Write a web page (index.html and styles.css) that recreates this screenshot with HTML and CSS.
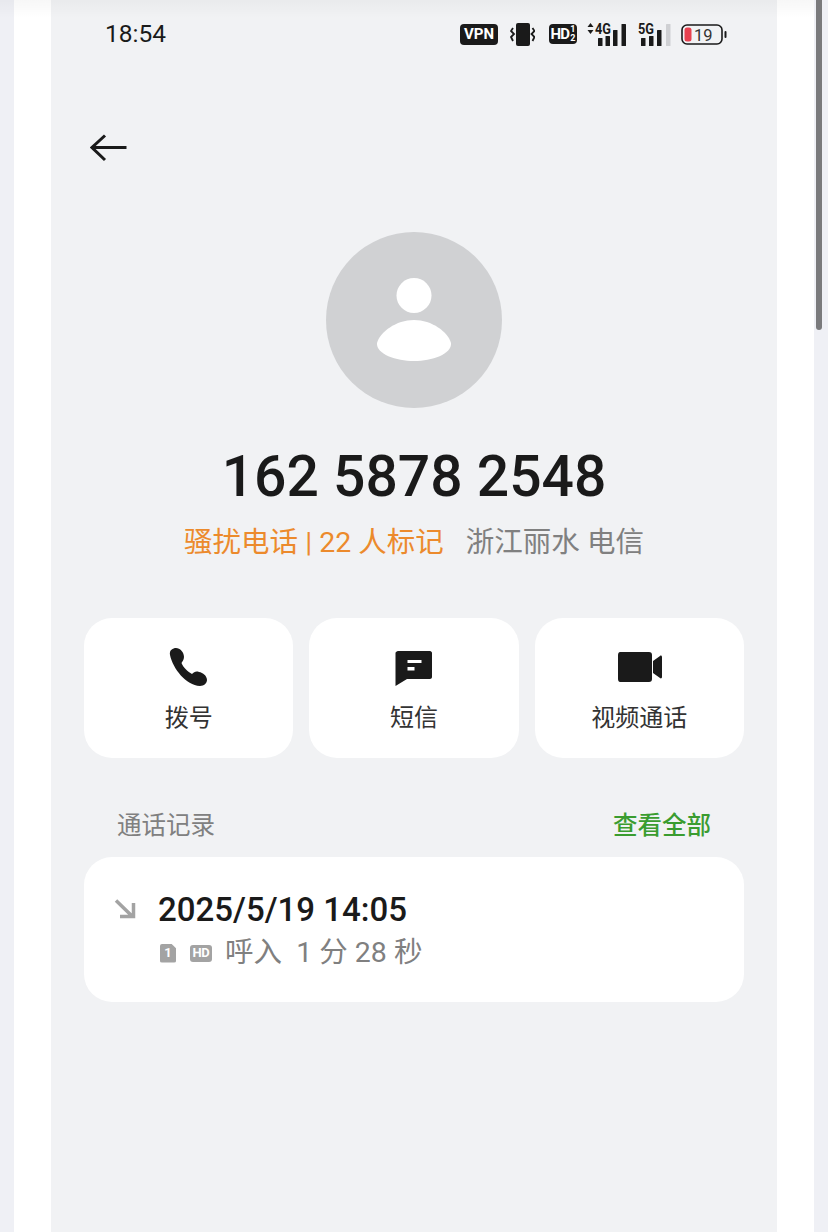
FILE: index.html
```html
<!DOCTYPE html>
<html lang="zh-CN">
<head>
  <meta charset="UTF-8">
  <title>通话详情</title>
  <meta name="viewport" content="width=device-width, initial-scale=1.0">
  <link rel="stylesheet" href="styles.css">
</head>
<body>
  <div class="page">
    <div class="side"></div>
    <main class="screen">
      <div class="status-bar">
        <span class="time">18:54</span>
        <div class="status-icons">
          <span class="pill vpn">VPN</span>
          <svg class="ic-vibrate" width="25" height="23" viewBox="0 0 25 23">
            <rect x="6" y="0" width="14" height="23" rx="2" fill="#1a1a1a"/>
            <path d="M3 5 L1 8 L4 11 L1 14 L3 18 M22.500 5 L24.500 8 L21.500 11 L24.500 14 L22.500 18" fill="none" stroke="#1a1a1a" stroke-width="1.800"/>
          </svg>
          <span class="pill hd">HD<span class="frac"><i>1</i><i>2</i></span></span>
          <svg class="ic-signal" width="41" height="24" viewBox="0 0 41 24">
            <path d="M1.500 5 L4.500 1 L7.500 5 Z M1.500 8 L7.500 8 L4.500 12 Z" fill="#1a1a1a"/>
            <text x="9" y="12" class="net" textLength="16" lengthAdjust="spacingAndGlyphs">4G</text>
            <rect x="12" y="16" width="4.500" height="8" rx="0.500" fill="#1a1a1a"/>
            <rect x="19.500" y="14" width="4.500" height="10" rx="0.500" fill="#1a1a1a"/>
            <rect x="27" y="8" width="4.500" height="16" rx="0.500" fill="#1a1a1a"/>
            <rect x="35.500" y="2" width="4.500" height="22" rx="0.500" fill="#1a1a1a"/>
          </svg>
          <svg class="ic-signal" width="33" height="24" viewBox="0 0 33 24">
            <text x="0" y="12" class="net" textLength="16" lengthAdjust="spacingAndGlyphs">5G</text>
            <rect x="3" y="16" width="4.500" height="8" rx="0.500" fill="#1a1a1a"/>
            <rect x="11" y="14" width="4.500" height="10" rx="0.500" fill="#1a1a1a"/>
            <rect x="19" y="8" width="4.500" height="16" rx="0.500" fill="#1a1a1a"/>
            <rect x="28" y="2" width="4.500" height="22" rx="0.500" fill="#cfd0d3"/>
          </svg>
          <svg class="ic-battery" width="46" height="21" viewBox="0 0 46 21">
            <rect x="1" y="1" width="40" height="19" rx="5" fill="none" stroke="#1a1a1a" stroke-width="1.600"/>
            <rect x="3.500" y="3.500" width="7" height="14" rx="2.500" fill="#e8414f"/>
            <rect x="43.500" y="7" width="2" height="7" rx="1" fill="#1a1a1a"/>
            <text x="13" y="16.500" class="batt">19</text>
          </svg>
        </div>
      </div>

      <div class="back">
        <svg width="38" height="28" viewBox="0 0 38 28">
          <path d="M2 13.500 H36.500 M15 1.500 L2 13.500 L15 26" fill="none" stroke="#1a1a1a" stroke-width="3"/>
        </svg>
      </div>

      <div class="avatar">
        <svg width="76" height="84" viewBox="0 0 76 84">
          <circle cx="38" cy="17.500" r="17.500" fill="#fff"/>
          <path d="M38 42 C56 42 72 54 75 65 C76 76 56 83 38 83 C20 83 0 76 1 65 C4 54 20 42 38 42 Z" fill="#fff"/>
        </svg>
      </div>

      <h1 class="number">162 5878 2548</h1>
      <p class="sub"><span class="spam">骚扰电话 | 22 人标记</span><span class="region">浙江丽水 电信</span></p>

      <div class="actions">
        <div class="action">
          <svg width="40" height="40" viewBox="0 0 40 40">
            <path d="M1 8 C0 3 4 1 7 1 C11 1 15 5 15 10 C15 13 13 15 12.500 16 C14 20 19 25 23 27 C25 25 27 24 30 25 C34 25.500 38 29 38 33 C38 36 35 39 31 39 C17 38 4 22 1 8 Z" fill="#1a1a1a"/>
          </svg>
          <span>拨号</span>
        </div>
        <div class="action">
          <svg width="40" height="40" viewBox="0 0 40 40">
            <path d="M4 4 H36 C37 4 38 5 38 6 V30 C38 31 37 32 36 32 H13 L1.500 39 V6 C1.500 5 3 4 4 4 Z" fill="#1a1a1a"/>
            <rect x="13.500" y="13" width="14" height="3" fill="#fff"/>
            <rect x="13.500" y="20" width="7" height="3.500" fill="#fff"/>
          </svg>
          <span>短信</span>
        </div>
        <div class="action">
          <svg width="46" height="32" viewBox="0 0 46 32">
            <path d="M4 1 H33 C35 1 36 2 36 4 V28 C36 30 35 31 33 31 H4 C3 31 2 30 2 28 V4 C2 2 3 1 4 1 Z M37 10 L44 5 C45 4 46 5 46 6 V26 C46 27 45 28 44 27 L37 22 Z" fill="#1a1a1a"/>
          </svg>
          <span>视频通话</span>
        </div>
      </div>

      <div class="section-head">
        <span class="section-title">通话记录</span>
        <span class="see-all">查看全部</span>
      </div>

      <div class="record">
        <svg class="dir" width="22" height="20" viewBox="0 0 22 20">
          <path d="M2 1.500 L19 18 M19.500 4 V17.500 H6" fill="none" stroke="#a3a3a3" stroke-width="3.500"/>
        </svg>
        <div class="record-body">
          <div class="record-time">2025/5/19 14:05</div>
          <div class="record-info">
            <span class="tag sim">1</span>
            <span class="tag hd-tag">HD</span>
            <span class="record-text">呼入&nbsp; 1 分 28 秒</span>
          </div>
        </div>
      </div>
    </main>
    <div class="side"></div>
  </div>
  <div class="scrollbar"></div>
  <div class="top-fade"></div>
</body>
</html>
```

FILE: styles.css
```css
* {
  box-sizing: border-box;
}

html, body {
  margin: 0;
  height: 100%;
  overflow: hidden;
}

body {
  background: #eff0f5;
  font-family: Roboto, "Noto Sans CJK SC", sans-serif;
  color: #1a1a1a;
}

.page {
  display: flex;
  height: 1232px;
  padding: 0 14px;
}

.side {
  width: 37px;
  background: #fff;
}

.screen {
  width: 726px;
  padding: 0 33px;
  background: #f1f2f4;
}

.status-bar {
  display: flex;
  justify-content: space-between;
  align-items: center;
  height: 44px;
  margin-top: 12px;
  padding: 0 17px 0 21px;
}

.time {
  font-size: 24.500px;
  line-height: 44px;
}

.status-icons {
  display: flex;
  align-items: center;
  height: 24px;
}

.pill {
  display: flex;
  align-items: center;
  justify-content: center;
  height: 21px;
  background: #1a1a1a;
  color: #fff;
  border-radius: 4px;
  font-weight: 700;
}

.vpn {
  width: 38px;
  font-size: 15px;
}

.ic-vibrate {
  margin-left: 12px;
}

.hd {
  width: 28px;
  height: 20px;
  margin-left: 14px;
  font-size: 15px;
  letter-spacing: -0.8px;
}

.frac {
  display: flex;
  flex-direction: column;
  margin-left: 1px;
  font-size: 9px;
  line-height: 9px;
  letter-spacing: 0;
}

.frac i {
  font-style: normal;
}

.ic-signal {
  margin-left: 9px;
}

.ic-signal + .ic-signal {
  margin-left: 11px;
}

.ic-battery {
  margin-left: 10px;
}

.net {
  font: 700 14.500px Roboto, sans-serif;
  fill: #1a1a1a;
}

.batt {
  font: 400 16.500px Roboto, sans-serif;
  fill: #333;
}

.back {
  height: 28px;
  margin-top: 78px;
  padding-left: 6px;
  line-height: 0;
}

.avatar {
  display: flex;
  align-items: center;
  justify-content: center;
  width: 176px;
  height: 176px;
  margin: 70px auto 0;
  border-radius: 50%;
  background: #d0d1d3;
}

.number {
  margin: 33px 0 0;
  font-size: 57px;
  font-weight: 500;
  line-height: 72px;
  text-align: center;
}

.sub {
  display: flex;
  justify-content: center;
  gap: 22px;
  margin: 9px 0 0;
  font-size: 28.500px;
  line-height: 42px;
}

.spam {
  color: #ec8a2c;
}

.region {
  color: #808080;
}

.actions {
  display: grid;
  grid-template-columns: repeat(3, 1fr);
  gap: 16px;
  margin-top: 54px;
}

.action {
  display: flex;
  flex-direction: column;
  align-items: center;
  height: 140px;
  padding-top: 29px;
  background: #fff;
  border-radius: 28px;
  font-size: 24px;
}

.action svg {
  height: 40px;
}

.action span {
  margin-top: 13px;
  line-height: 36px;
  color: #333;
}

.section-head {
  display: flex;
  justify-content: space-between;
  margin-top: 50px;
  padding: 0 33px;
  font-size: 24.500px;
  line-height: 36px;
}

.section-title {
  color: #808080;
}

.see-all {
  color: #3a9c2f;
  font-weight: 500;
}

.record {
  display: flex;
  height: 145px;
  margin-top: 13px;
  padding: 34px 30px 0;
  background: #fff;
  border-radius: 28px;
}

.dir {
  margin-top: 8px;
}

.record-body {
  margin-left: 22px;
}

.record-time {
  margin-top: -1px;
  font-size: 33px;
  font-weight: 500;
  line-height: 40px;
}

.record-info {
  display: flex;
  align-items: center;
  margin-top: 3px;
  line-height: 40px;
}

.tag {
  display: flex;
  align-items: center;
  justify-content: center;
  height: 18px;
  background: #a3a3a3;
  color: #fff;
  font-size: 13px;
  font-weight: 700;
}

.sim {
  width: 16px;
  height: 19px;
  margin-left: 2px;
  border-radius: 2px;
  clip-path: polygon(0 0, 70% 0, 100% 25%, 100% 100%, 0 100%);
}

.hd-tag {
  width: 22px;
  height: 17px;
  margin-left: 14px;
  border-radius: 3px;
  letter-spacing: -0.3px;
}

.record-text {
  margin-left: 13px;
  color: #808080;
  font-size: 28.500px;
}

.scrollbar {
  position: absolute;
  top: 0;
  left: 816px;
  width: 6px;
  height: 330px;
  background: #7a7a7c;
  border-radius: 0 0 3px 3px;
}

.top-fade {
  position: absolute;
  top: 0;
  left: 0;
  width: 814px;
  height: 18px;
  background: linear-gradient(#00000008, #00000000);
}
```
